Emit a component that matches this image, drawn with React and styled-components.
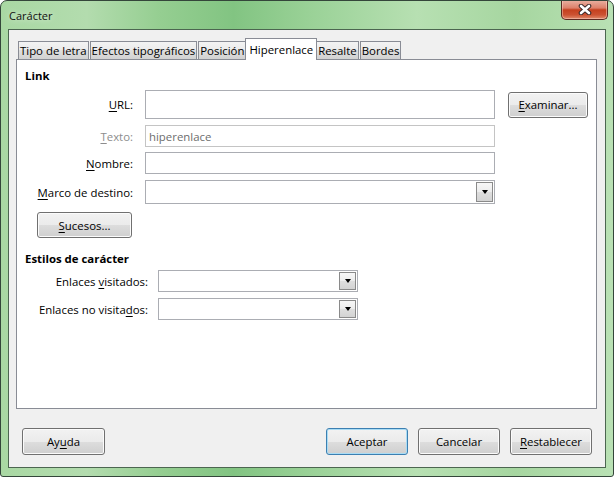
import React from "react";
import styled, { createGlobalStyle } from "styled-components";

const Global = createGlobalStyle`
  html, body { margin: 0; padding: 0; background: #ffffff; }
  body {
    font-family: "Open Sans", "Noto Sans", sans-serif;
    font-size: 11.4px;
    color: #000;
  }
  * { box-sizing: border-box; }
`;

const Window = styled.div`
  width: 614px;
  height: 477px;
  display: flex;
  flex-direction: column;
  border: 1px solid #34463a;
  border-radius: 7px 7px 3px 3px;
  background: linear-gradient(90deg, #a9d8a3 0%, #b3dcae 14%, #95ce91 26%, #82c482 38%, #99d196 50%, #b7e0b2 68%, #a6d6a0 84%, #b9e1b4 100%);
  overflow: hidden;
`;

const TitleBar = styled.div`
  height: 28px;
  display: flex;
  justify-content: space-between;
  align-items: flex-start;
  padding-left: 8px;
`;

const Title = styled.span`
  align-self: center;
  font-size: 11px;
  color: #111;
  margin-top: 1px;
  text-shadow: 0 0 6px rgba(255, 255, 255, 0.8);
`;

const CloseButton = styled.div`
  width: 47px;
  height: 20px;
  margin-right: 5px;
  margin-top: -1px;
  display: flex;
  align-items: center;
  justify-content: center;
  border: 1px solid #5a2a22;
  border-top: none;
  border-radius: 0 0 5px 5px;
  background: linear-gradient(#eab2a3 0%, #dd806a 42%, #c5401f 52%, #cc5232 78%, #e08a6c 100%);
  box-shadow: inset 0 0 0 1px rgba(255, 220, 210, 0.45);
`;

const Client = styled.div`
  flex: 1;
  margin: 0 7px 8px 7px;
  border: 1px solid #4c6650;
  background: #f0f0f0;
  display: flex;
  flex-direction: column;
  padding: 8px 8px 12px 7px;
`;

const TabStrip = styled.div`
  display: flex;
  align-items: flex-end;
  padding-left: 2px;
  height: 22px;
  margin-bottom: -1px;
  position: relative;
  z-index: 1;
`;

const Tab = styled.div`
  display: flex;
  justify-content: center;
  height: ${(p) => (p.$active ? "22px" : "18px")};
  margin: ${(p) => (p.$active ? "0 -1px 0 -2px" : "0 1px 1px 0")};
  border: 1px solid #898c95;
  border-bottom: none;
  background: ${(p) =>
    p.$active
      ? "#ffffff"
      : "linear-gradient(#f3f3f3 0%, #ebebeb 50%, #dedede 50%, #d2d2d2 100%)"};
  white-space: nowrap;
  line-height: 15px;
  padding-top: ${(p) => (p.$active ? "3px" : "1px")};
  padding-left: ${(p) => (p.$active ? "3px" : "1px")};
  padding-right: ${(p) => (p.$active ? "3px" : "1px")};
`;

const Panel = styled.div`
  flex: 1;
  border: 1px solid #898c95;
  background: #ffffff;
  padding: 0 8px;
  display: flex;
  flex-direction: column;
`;

const Heading = styled.div`
  font-weight: 700;
  line-height: 16px;
  margin-top: ${(p) => p.$mt}px;
`;

const Row = styled.div`
  display: grid;
  grid-template-columns: ${(p) => p.$cols};
  column-gap: ${(p) => p.$gap}px;
  align-items: center;
  height: ${(p) => p.$h}px;
  margin-top: ${(p) => p.$mt}px;
`;

const Label = styled.span`
  text-align: right;
  white-space: nowrap;
  color: ${(p) => (p.$disabled ? "#8d8d8d" : "#000")};
`;

const Key = styled.span`
  text-decoration: underline;
  text-underline-offset: 2px;
`;

const TextBox = styled.div`
  height: 100%;
  border: 1px solid ${(p) => (p.$disabled ? "#c4c4c4" : "#abadb3")};
  background: #ffffff;
  color: #6d6d6d;
  display: flex;
  align-items: center;
  padding-left: 3px;
`;

const Combo = styled.div`
  height: 100%;
  border: 1px solid #abadb3;
  background: #ffffff;
  display: flex;
  justify-content: flex-end;
  padding: 1px;
`;

const DropButton = styled.div`
  width: 17px;
  height: 100%;
  border: 1px solid #8a8a8a;
  background: linear-gradient(#f7f7f7 0%, #ececec 50%, #dedede 51%, #d3d3d3 100%);
  display: flex;
  align-items: center;
  justify-content: center;
`;

const Arrow = styled.span`
  width: 0;
  height: 0;
  border-left: 3.5px solid transparent;
  border-right: 3.5px solid transparent;
  border-top: 4px solid #000;
`;

const Button = styled.div`
  width: ${(p) => p.$w}px;
  height: ${(p) => p.$h || 27}px;
  margin-left: ${(p) => p.$ml || 0}px;
  display: flex;
  align-items: center;
  justify-content: center;
  border: 1px solid ${(p) => (p.$default ? "#3c7fb1" : "#707070")};
  border-radius: 3px;
  background: linear-gradient(#f2f2f2 0%, #ebebeb 50%, #dddddd 51%, #cfcfcf 100%);
  box-shadow: inset 0 0 0 1px ${(p) => (p.$default ? "#a9dcf5" : "#fbfbfb")};
  white-space: nowrap;
`;

const Footer = styled.div`
  display: flex;
  gap: 10px;
  margin-top: 19px;
  padding: 0 5px 0 6px;
`;

const Spacer = styled.div`
  flex: 1;
`;

const FIELD_COLS = "108px 350px 80px";
const STYLE_COLS = "123px 200px";

const ComboBox = () => (
  <Combo>
    <DropButton>
      <Arrow />
    </DropButton>
  </Combo>
);

export default function App() {
  return (
    <>
      <Global />
      <Window>
        <TitleBar>
          <Title>Carácter</Title>
          <CloseButton>
            <svg width="14" height="11" viewBox="0 0 14 11">
              <path d="M3 2 L11 9 M11 2 L3 9" stroke="#3b2a2a" strokeWidth="4.6" strokeLinecap="round" />
              <path d="M3 2 L11 9 M11 2 L3 9" stroke="#ffffff" strokeWidth="2.6" strokeLinecap="round" />
            </svg>
          </CloseButton>
        </TitleBar>
        <Client>
          <TabStrip>
            <Tab>Tipo de letra</Tab>
            <Tab>Efectos tipográficos</Tab>
            <Tab>Posición</Tab>
            <Tab $active>Hiperenlace</Tab>
            <Tab>Resalte</Tab>
            <Tab>Bordes</Tab>
          </TabStrip>
          <Panel>
            <Heading $mt={8}>Link</Heading>
            <Row $cols={FIELD_COLS} $gap={12} $h={29} $mt={6}>
              <Label>
                <Key>U</Key>RL:
              </Label>
              <TextBox />
              <Button $w={80} $h={26} $ml={1}>
                <Key>E</Key>xaminar...
              </Button>
            </Row>
            <Row $cols={FIELD_COLS} $gap={12} $h={22} $mt={6}>
              <Label $disabled>
                <Key>T</Key>exto:
              </Label>
              <TextBox $disabled>hiperenlace</TextBox>
            </Row>
            <Row $cols={FIELD_COLS} $gap={12} $h={22} $mt={5}>
              <Label>
                <Key>N</Key>ombre:
              </Label>
              <TextBox />
            </Row>
            <Row $cols={FIELD_COLS} $gap={12} $h={24} $mt={6}>
              <Label>
                <Key>M</Key>arco de destino:
              </Label>
              <ComboBox />
            </Row>
            <Row $cols="95px" $gap={0} $h={26} $mt={8}>
              <Button $w={95} $h={26} $ml={12}>
                <Key>S</Key>ucesos...
              </Button>
            </Row>
            <Heading $mt={13}>Estilos de carácter</Heading>
            <Row $cols={STYLE_COLS} $gap={10} $h={22} $mt={3}>
              <Label>
                Enlaces <Key>v</Key>isitados:
              </Label>
              <ComboBox />
            </Row>
            <Row $cols={STYLE_COLS} $gap={10} $h={22} $mt={6}>
              <Label>
                Enlaces no visita<Key>d</Key>os:
              </Label>
              <ComboBox />
            </Row>
          </Panel>
          <Footer>
            <Button $w={83}>
              Ay<Key>u</Key>da
            </Button>
            <Spacer />
            <Button $w={82} $default>
              Aceptar
            </Button>
            <Button $w={82}>Cancelar</Button>
            <Button $w={82}>
              <Key>R</Key>establecer
            </Button>
          </Footer>
        </Client>
      </Window>
    </>
  );
}
